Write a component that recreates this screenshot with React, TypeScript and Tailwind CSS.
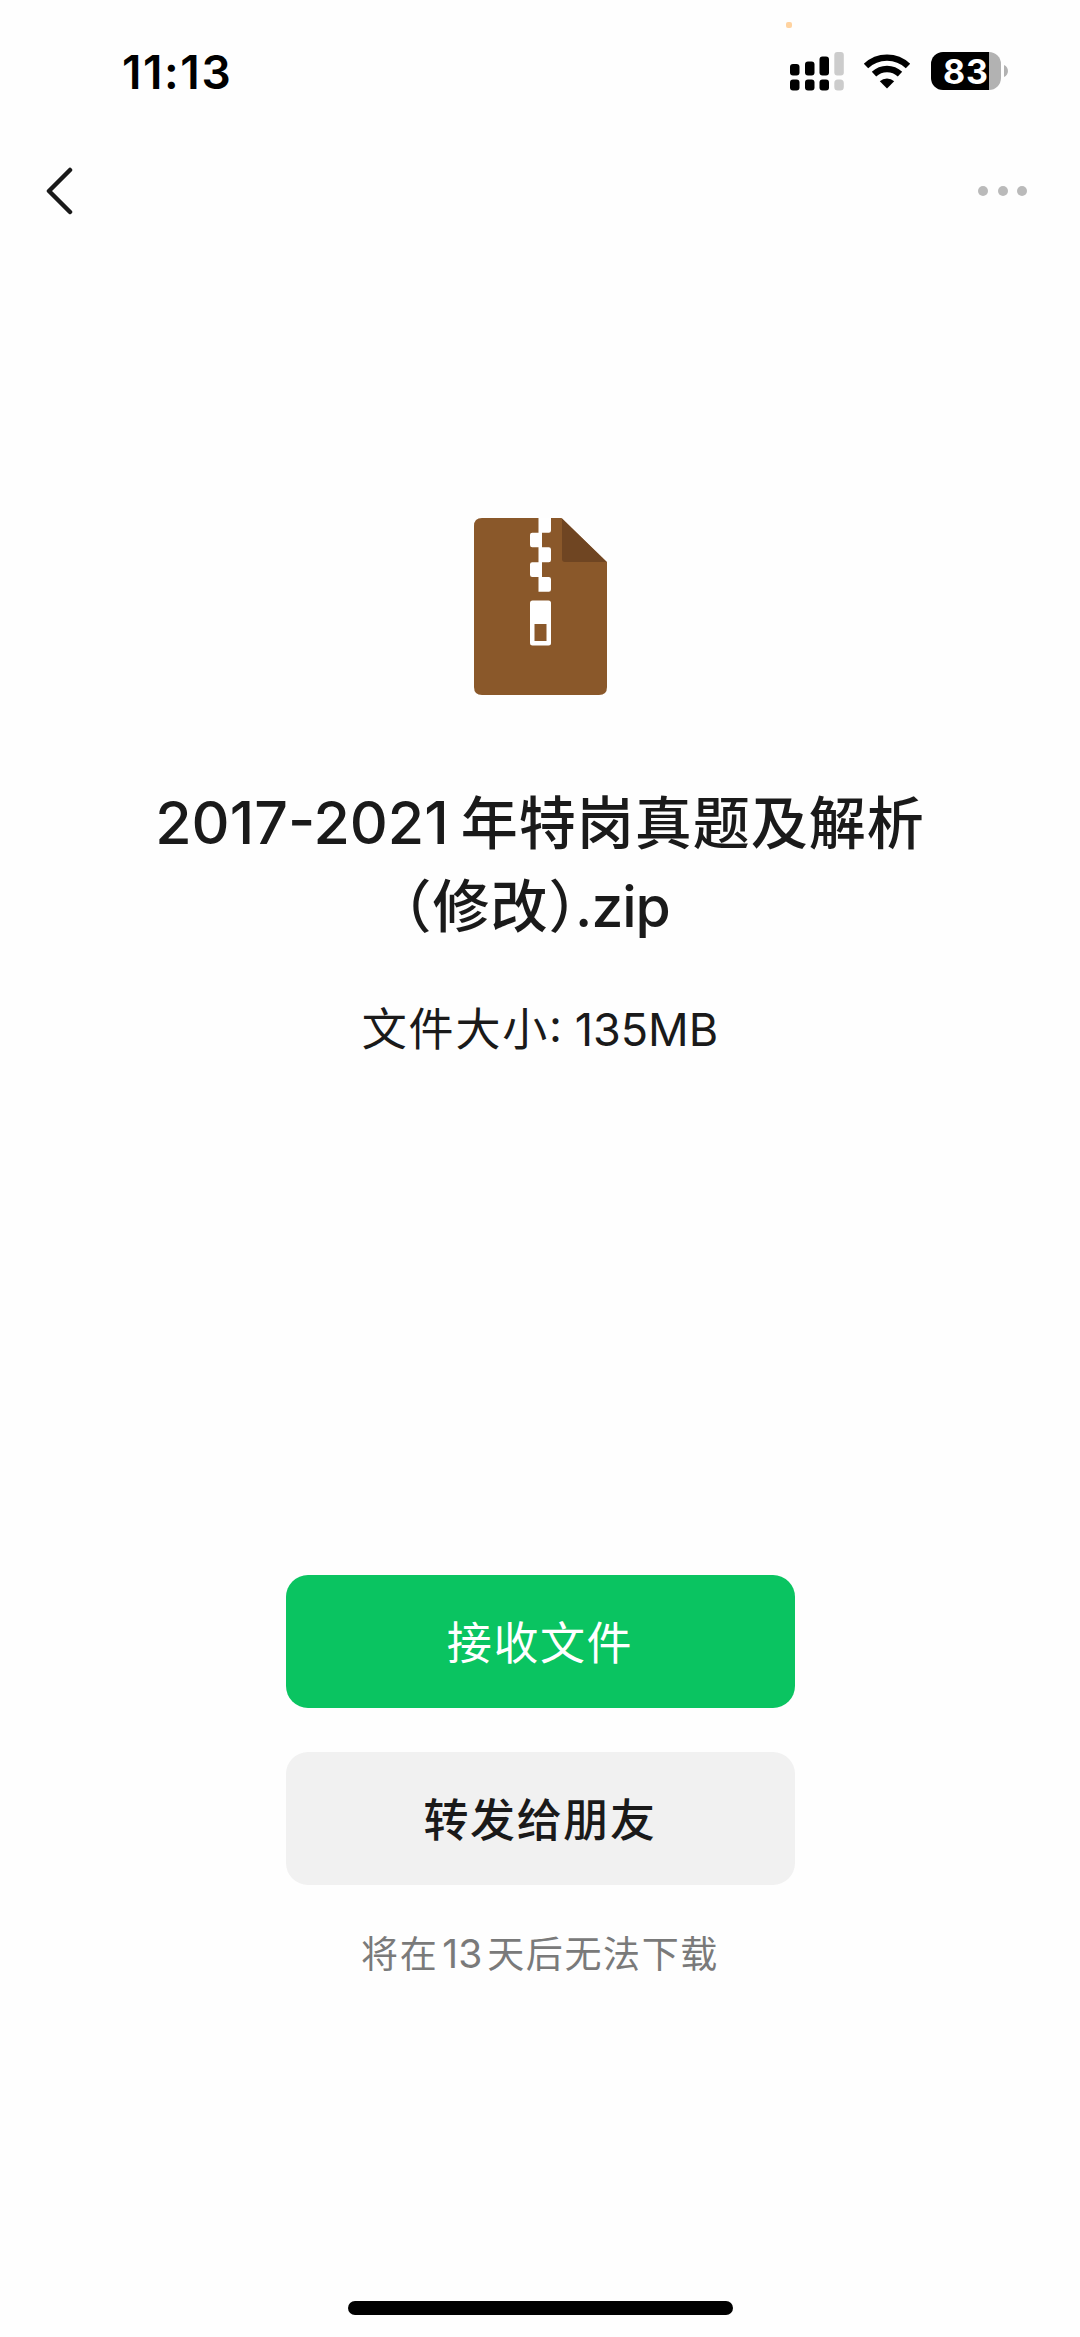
import React from 'react';

interface ActionButtonProps {
  label: string;
  className: string;
}

const SignalIcon: React.FC = () => (
  <svg width="54" height="40" viewBox="0 0 54 40" fill="#000">
    <rect x="0" y="13" width="9.5" height="11.5" rx="3" />
    <rect x="15" y="10.5" width="9.5" height="14" rx="3" />
    <rect x="29.5" y="5.5" width="9.5" height="19" rx="3" />
    <rect x="0" y="28.5" width="9.5" height="11" rx="3" />
    <rect x="15" y="28.5" width="9.5" height="11" rx="3" />
    <rect x="29.5" y="28.5" width="9.5" height="11" rx="3" />
    <g fill="#cccccc">
      <rect x="44.3" y="1" width="9.5" height="23.5" rx="3" />
      <rect x="44.3" y="28.5" width="9.5" height="11" rx="3.5" />
    </g>
  </svg>
);

const WifiIcon: React.FC = () => (
  <svg width="48" height="36" viewBox="0 0 48 36" fill="none" stroke="#000" strokeWidth="6.4">
    <path d="M3 13A30.5 30.5 0 0 1 45 13" />
    <path d="M11 21.2A19 19 0 0 1 37 21.2" />
    <path d="M24 35.5L16.8 28.2A10.6 10.6 0 0 1 31.2 28.2Z" fill="#000" stroke="none" />
  </svg>
);

const BatteryIcon: React.FC = () => (
  <div className="flex items-center">
    <div className="flex h-[38px] w-[70px] items-center justify-end rounded-[12px] bg-[linear-gradient(to_right,#000_58px,#b2b2b2_58px)] pt-px pr-[12px]">
      <span className="text-[34px] leading-[37px] font-bold tracking-[1px] text-white">83</span>
    </div>
    <svg className="ml-[3px]" width="4" height="12" viewBox="0 0 4 12" fill="#b2b2b2">
      <path d="M0 0C5.3 2 5.3 10 0 12Z" />
    </svg>
  </div>
);

const ZipFileIcon: React.FC = () => (
  <svg width="133" height="177" viewBox="0 0 133 177">
    <path d="M8 0H87.5L133 44V169Q133 177 125 177H8Q0 177 0 169V8Q0 0 8 0Z" fill="#8a582a" />
    <path d="M88 0.5L132.5 44H91Q88 44 88 41Z" fill="#6f4522" />
    <g fill="#fff">
      <path d="M64.5 0H77V12.5Q77 14.7 74.8 14.7H68V29.3H74.8Q77 29.3 77 31.5V42Q77 44.2 74.8 44.2H68V59H74.8Q77 59 77 61.2V71.5Q77 73.7 74.8 73.7H64.5V59H58.2Q56 59 56 56.8V46.4Q56 44.2 58.2 44.2H64.5V29.3H58.2Q56 29.3 56 27.1V16.9Q56 14.7 58.2 14.7H64.5Z" />
      <rect x="56" y="82.5" width="21" height="45" rx="2.5" />
    </g>
    <rect x="60.5" y="106" width="12" height="17" fill="#8a582a" />
  </svg>
);

const ActionButton: React.FC<ActionButtonProps> = ({ label, className }) => (
  <button
    type="button"
    className={`flex h-[133px] w-[509px] items-center justify-center rounded-[22px] pt-[5px] text-[45px] tracking-[1.6px] ${className}`}
  >
    {label}
  </button>
);

const StatusBar: React.FC = () => (
  <header className="relative flex h-[142px] items-start justify-between pt-[44px] pr-[72px] pl-[122px]">
    <span className="text-[46px] leading-[56px] font-semibold tracking-[1.6px] text-black">11:13</span>
    <div className="flex h-[56px] items-center pb-[2px]">
      <SignalIcon />
      <div className="ml-[19px]">
        <WifiIcon />
      </div>
      <div className="ml-[20px]">
        <BatteryIcon />
      </div>
    </div>
    {/* microphone-in-use indicator */}
    <i className="absolute top-[22px] left-[786px] size-[6px] rounded-[2px] bg-[#ffd3a0]" />
  </header>
);

const App: React.FC = () => {
  return (
    <div className="flex h-[2337px] w-[1080px] flex-col bg-[#fefefe] font-['Inter','Noto_Sans_CJK_SC',sans-serif] text-[#1a1a1a]">
      <StatusBar />

      <nav className="flex h-[98px] items-center justify-between pr-[53px] pl-[46px]">
        <svg width="28" height="48" viewBox="0 0 28 48" fill="none" stroke="#1a1a1a" strokeWidth="4.5" strokeLinecap="round" strokeLinejoin="round">
          <path d="M24 3L3 24L24 45" />
        </svg>
        <div className="flex gap-[9.5px]">
          <i className="size-[10px] rounded-full bg-[#bababa]" />
          <i className="size-[10px] rounded-full bg-[#bababa]" />
          <i className="size-[10px] rounded-full bg-[#bababa]" />
        </div>
      </nav>

      <main className="flex flex-1 flex-col items-center pt-[278px]">
        <ZipFileIcon />

        <h1 className="mt-[86px] flex flex-col items-center text-[57px] leading-[84px] font-medium whitespace-nowrap">
          <span className="flex h-[84px] items-baseline">
            <span className="text-[59px]">2017-2021</span>
            <span className="ml-[12px] tracking-[1px]">年特岗真题及解析</span>
          </span>
          <span className="flex h-[84px] items-baseline pr-[7px]">
            {/* half-width alternates for the full-width brackets */}
            <span className="tracking-[1px] [font-feature-settings:'halt']">（修改）</span>
            <span className="-ml-[3px] tracking-[-1px]">.zip</span>
          </span>
        </h1>

        <p className="mt-[51px] h-[60px] text-[45px] leading-[60px] whitespace-nowrap">
          <span className="tracking-[1.8px]">文件大小</span>: 135MB
        </p>

        <div className="mt-[515px] flex flex-col gap-[44px]">
          <ActionButton label="接收文件" className="bg-[#0ac461] text-white" />
          <ActionButton label="转发给朋友" className="bg-[#f1f1f1] font-medium" />
        </div>

        <p className="mt-[45px] flex items-baseline text-[37px] leading-[48px] whitespace-nowrap text-[#7a7a7a]">
          <span className="tracking-[1.6px]">将在</span>
          <span className="mr-[5px] ml-[4px] text-[39px]">13</span>
          <span className="tracking-[1.6px]">天后无法下载</span>
        </p>
      </main>

      <footer className="flex justify-center pb-[22px]">
        <div className="h-[14px] w-[385px] rounded-full bg-black" />
      </footer>
    </div>
  );
};

export default App;
